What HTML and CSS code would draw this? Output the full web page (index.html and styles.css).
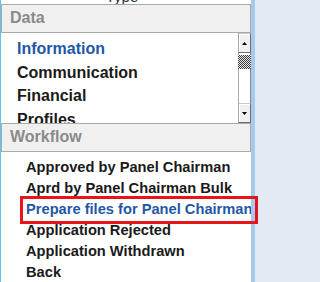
FILE: index.html
```html
<!DOCTYPE html>
<html>
<head>
<meta charset="utf-8">
<link rel="stylesheet" href="styles.css">
</head>
<body>
<div class="frame">
  <div class="edge-left"></div>
  <div class="panel">
    <div class="type"><div class="type-text">Type</div></div>
    <div class="hdr">Data</div>
    <div class="list">
      <div class="items">
        <div class="item active">Information</div>
        <div class="item">Communication</div>
        <div class="item">Financial</div>
        <div class="item">Profiles</div>
      </div>
      <div class="scroll">
        <div class="btn"><svg width="5" height="3" viewBox="0 0 5 3"><polygon points="0,3 5,3 2.5,0" fill="#000"/></svg></div>
        <div class="track small"></div>
        <div class="thumb"></div>
        <div class="track big"></div>
        <div class="btn"><svg width="5" height="3" viewBox="0 0 5 3"><polygon points="0,0 5,0 2.5,3" fill="#000"/></svg></div>
      </div>
    </div>
    <div class="hdr">Workflow</div>
    <div class="wf">
      <div class="wf-item">Approved by Panel Chairman</div>
      <div class="wf-item">Aprd by Panel Chairman Bulk</div>
      <div class="wf-item active">Prepare files for Panel Chairman</div>
      <div class="wf-item">Application Rejected</div>
      <div class="wf-item">Application Withdrawn</div>
      <div class="wf-item">Back</div>
    </div>
  </div>
  <div class="edge-right"></div>
  <div class="highlight"></div>
</div>
</body>
</html>
```

FILE: styles.css
```css
html, body {
  margin: 0;
  padding: 0;
}
body {
  width: 268px;
  height: 282px;
  overflow: hidden;
  background: #e2eaf4;
  font-family: "Liberation Sans", Arial, sans-serif;
  color: #1a1a1a;
}
.frame {
  position: relative;
  display: flex;
  height: 282px;
}
.edge-left {
  width: 1px;
  background: #5cc6ea;
}
.panel {
  width: 250px;
  background: #fff;
  overflow: hidden;
}
.edge-right {
  width: 4px;
  background: #a4caee;
}
.type {
  height: 4px;
  overflow: hidden;
}
.type-text {
  margin-top: -11px;
  padding-right: 8px;
  text-align: center;
  font-size: 15px;
  line-height: 16px;
  color: #2a3550;
}
.hdr {
  box-sizing: border-box;
  height: 29px;
  border: 1px solid #a9a9a9;
  background: #f0f0f0;
  color: #8a8a8a;
  font-size: 16px;
  font-weight: bold;
  line-height: 26px;
  padding-left: 8px;
}
.list {
  display: flex;
  height: 90px;
}
.items {
  flex: 1;
  overflow: hidden;
  padding: 4px 0 0 16px;
  font-size: 16px;
  font-weight: bold;
  line-height: 23.5px;
  white-space: nowrap;
}
.active {
  color: #1f57a6;
}
.scroll {
  width: 13px;
  display: flex;
  flex-direction: column;
}
.btn {
  box-sizing: border-box;
  height: 20px;
  background: #f0f0f0;
  border-style: solid;
  border-width: 1px;
  border-color: #c8c8c8 #6e6e6e #6e6e6e #a8a8a8;
  box-shadow: inset 1px 1px 0 #fff;
  display: flex;
  align-items: center;
  justify-content: center;
}
.btn svg {
  display: block;
}
.track {
  box-sizing: border-box;
  background: #fff;
  border-left: 1px solid #a8a8a8;
  border-right: 1px solid #8a8a8a;
}
.track.small {
  height: 2px;
}
.track.big {
  height: 34px;
}
.thumb {
  height: 14px;
  background: repeating-conic-gradient(#3c3c3c 0 25%, #e8e8e8 0 50%) 0 0 / 2px 2px;
}
.wf {
  padding: 5px 0 0 25px;
  font-size: 14.67px;
  font-weight: bold;
  line-height: 21px;
  white-space: nowrap;
}
.highlight {
  position: absolute;
  left: 20px;
  top: 196px;
  width: 238px;
  height: 28px;
  box-sizing: border-box;
  border: 3px solid #e8141c;
}
```
